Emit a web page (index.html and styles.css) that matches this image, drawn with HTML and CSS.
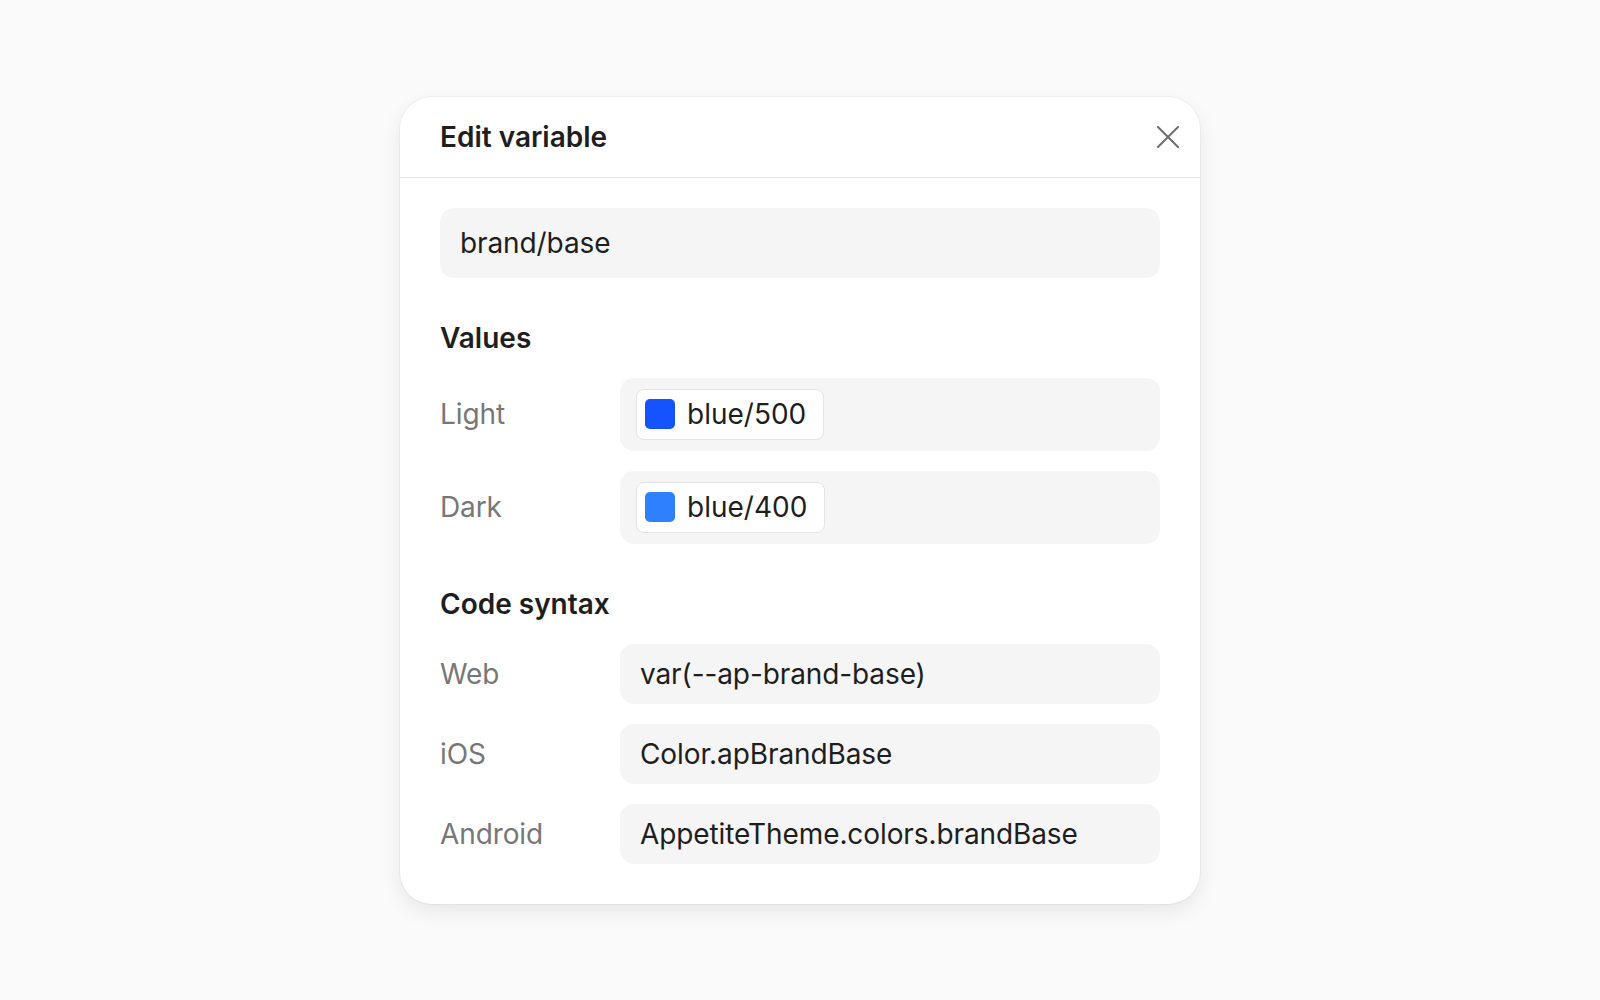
FILE: index.html
```html
<!DOCTYPE html>
<html lang="en">
<head>
<meta charset="utf-8">
<title>Edit variable</title>
<link rel="stylesheet" href="styles.css">
</head>
<body>
<div class="dialog">
  <div class="dialog-header">
    <h1 class="dialog-title">Edit variable</h1>
    <button class="close-btn" aria-label="Close">
      <svg width="22" height="22" viewBox="0 0 22 22"><path d="M1 1L21 21M21 1L1 21" stroke="#6e6e6e" stroke-width="2" fill="none" stroke-linecap="square"/></svg>
    </button>
  </div>
  <div class="dialog-body">
    <div class="name-input">brand/base</div>

    <h2 class="section-title">Values</h2>
    <div class="rows value-rows">
      <div class="row">
        <div class="row-label">Light</div>
        <div class="row-field value-field">
          <span class="chip"><span class="swatch swatch-500"></span><span class="chip-text">blue/500</span></span>
        </div>
      </div>
      <div class="row">
        <div class="row-label">Dark</div>
        <div class="row-field value-field">
          <span class="chip"><span class="swatch swatch-400"></span><span class="chip-text">blue/400</span></span>
        </div>
      </div>
    </div>

    <h2 class="section-title">Code syntax</h2>
    <div class="rows code-rows">
      <div class="row">
        <div class="row-label">Web</div>
        <div class="row-field code-field">var(--ap-brand-base)</div>
      </div>
      <div class="row">
        <div class="row-label">iOS</div>
        <div class="row-field code-field">Color.apBrandBase</div>
      </div>
      <div class="row">
        <div class="row-label">Android</div>
        <div class="row-field code-field">AppetiteTheme.colors.brandBase</div>
      </div>
    </div>
  </div>
</div>
</body>
</html>
```
FILE: styles.css
```css
* { box-sizing: border-box; }
html, body { margin: 0; padding: 0; }
body {
  background: #fafafa;
  font-family: Inter, "Noto Sans", "Liberation Sans", sans-serif;
  color: #1e1e1e;
  min-height: 100vh;
  display: flex;
  align-items: center;
  justify-content: center;
}
.dialog {
  width: 800px;
  background: #ffffff;
  border-radius: 32px;
  box-shadow: 0 0 0 1px rgba(0,0,0,0.035), 0 8px 20px rgba(0,0,0,0.08);
}
.dialog-header {
  height: 81px;
  border-bottom: 1px solid #e8e8e8;
  display: flex;
  align-items: center;
  justify-content: space-between;
  padding: 0 21px 0 40px;
}
.dialog-title {
  margin: 0;
  font-size: 28px;
  font-weight: 600;
  line-height: 32px;
  color: #1e1e1e;
}
.close-btn {
  border: 0;
  background: none;
  padding: 0;
  width: 22px;
  height: 22px;
  display: flex;
  cursor: pointer;
}
.dialog-body {
  padding: 30px 40px 40px;
}
.name-input {
  height: 70px;
  background: #f5f5f5;
  border-radius: 14px;
  padding: 0 20px;
  display: flex;
  align-items: center;
  font-size: 28px;
  letter-spacing: -0.1px;
  color: #1e1e1e;
}
.section-title {
  margin: 44px 0 24px;
  font-size: 28px;
  line-height: 32px;
  font-weight: 600;
  color: #1e1e1e;
}
.rows {
  display: flex;
  flex-direction: column;
  gap: 20px;
}
.row {
  display: grid;
  grid-template-columns: 180px 1fr;
  align-items: center;
}
.row-label {
  font-size: 28px;
  letter-spacing: -0.1px;
  color: #777777;
}
.row-field {
  background: #f5f5f5;
  border-radius: 14px;
  display: flex;
  align-items: center;
}
.value-field {
  height: 73px;
  padding: 0 16px;
}
.code-field {
  height: 60px;
  padding: 0 20px;
  font-size: 28px;
  letter-spacing: -0.1px;
  color: #1e1e1e;
}
.chip {
  height: 51px;
  display: inline-flex;
  align-items: center;
  gap: 12px;
  padding: 0 17px 0 8px;
  background: #ffffff;
  border: 1px solid #e4e4e4;
  border-radius: 8px;
}
.swatch {
  width: 30px;
  height: 30px;
  border-radius: 5px;
  display: block;
}
.swatch-500 { background: #1553ff; }
.swatch-400 { background: #2e80ff; }
.chip-text {
  font-size: 28px;
  color: #1e1e1e;
}
```
